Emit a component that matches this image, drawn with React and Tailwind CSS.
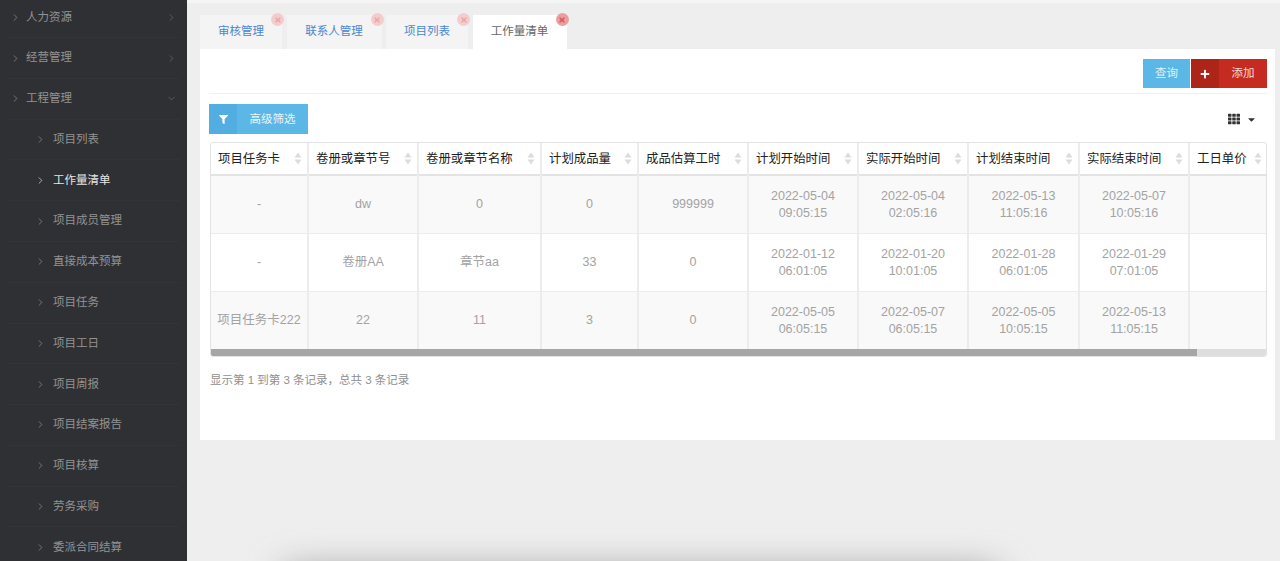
import React from "react";
import { FaFilter, FaPlus, FaTh, FaCaretDown, FaTimes } from "react-icons/fa";
import { ChevronRight, ChevronDown } from "lucide-react";

const fontStack = "font-['Liberation_Sans','Noto_Sans_CJK_SC',sans-serif]";

const menus = [
  { name: "人力资源", arrow: "right" },
  { name: "经营管理", arrow: "right" },
  { name: "工程管理", arrow: "down" },
  { name: "项目列表", sub: true },
  { name: "工作量清单", sub: true, active: true },
  { name: "项目成员管理", sub: true },
  { name: "直接成本预算", sub: true },
  { name: "项目任务", sub: true },
  { name: "项目工日", sub: true },
  { name: "项目周报", sub: true },
  { name: "项目结案报告", sub: true },
  { name: "项目核算", sub: true },
  { name: "劳务采购", sub: true },
  { name: "委派合同结算", sub: true },
];

const tabs = [
  { name: "审核管理", width: "w-[82px]" },
  { name: "联系人管理", width: "w-[95px]" },
  { name: "项目列表", width: "w-[82px]" },
  { name: "工作量清单", width: "w-[94px]", active: true },
];

const columns = [
  { title: "项目任务卡", width: "w-[97px]" },
  { title: "卷册或章节号", width: "w-[110px]" },
  { title: "卷册或章节名称", width: "w-[123px]" },
  { title: "计划成品量", width: "w-[97px]" },
  { title: "成品估算工时", width: "w-[110px]" },
  { title: "计划开始时间", width: "w-[110px]" },
  { title: "实际开始时间", width: "w-[110px]" },
  { title: "计划结束时间", width: "w-[111px]" },
  { title: "实际结束时间", width: "w-[110px]" },
  { title: "工日单价", width: "w-[79px]" },
];

const rows = [
  ["-", "dw", "0", "0", "999999", ["2022-05-04", "09:05:15"], ["2022-05-04", "02:05:16"], ["2022-05-13", "11:05:16"], ["2022-05-07", "10:05:16"], ""],
  ["-", "卷册AA", "章节aa", "33", "0", ["2022-01-12", "06:01:05"], ["2022-01-20", "10:01:05"], ["2022-01-28", "06:01:05"], ["2022-01-29", "07:01:05"], ""],
  ["项目任务卡222", "22", "11", "3", "0", ["2022-05-05", "06:05:15"], ["2022-05-07", "06:05:15"], ["2022-05-05", "10:05:15"], ["2022-05-13", "11:05:15"], ""],
];

const SortIcon = () => (
  <svg width="8" height="13" viewBox="0 0 8 13" className="shrink-0">
    <path d="M4 0.5 L7.5 5.5 H0.5 Z" fill="#dcdcdc" />
    <path d="M4 12.5 L7.5 7.5 H0.5 Z" fill="#dcdcdc" />
  </svg>
);

const Sidebar = () => (
  <div className="w-[187px] h-full shrink-0 bg-[#2f3033] overflow-hidden">
    <div className="-mt-[2.6px] px-2">
      {menus.map((m) => (
        <div
          key={m.name}
          className={`h-[40.77px] flex items-center border-b border-[#333437] text-[11.5px] ${
            m.sub ? "pl-[27px]" : "pl-[2px]"
          } ${m.active ? "text-[#e6e6e6]" : "text-[#939393]"}`}
        >
          <ChevronRight size={11} strokeWidth={1.5} className={`shrink-0 ${m.sub ? "mr-[7px]" : "mr-[5px]"}`} />
          <span className="flex-1">{m.name}</span>
          {m.arrow === "right" && <ChevronRight size={11} strokeWidth={1.2} className="mr-[2px] text-[#7d7d7d]" />}
          {m.arrow === "down" && <ChevronDown size={11} strokeWidth={1.2} className="mr-[2px] text-[#7d7d7d]" />}
        </div>
      ))}
    </div>
  </div>
);

const Tabs = () => (
  <div className="flex gap-[4.5px] h-[34px] pl-[13px]">
    {tabs.map((t) => (
      <div
        key={t.name}
        className={`relative ${t.width} flex items-center justify-center text-[11.5px] ${
          t.active ? "bg-white text-[#666666]" : "bg-[#f4f4f4] text-[#4a86d0]"
        }`}
      >
        {t.name}
        <span
          className={`absolute -top-[2px] -right-[2px] w-[13px] h-[13px] rounded-full flex items-center justify-center text-[8px] ${
            t.active ? "bg-[#ee9d9d] text-[#cf5a5a]" : "bg-[#f3cdcd] text-[#e8a6a6]"
          }`}
        >
          <FaTimes />
        </span>
      </div>
    ))}
  </div>
);

const Toolbar = () => (
  <div className="ml-[9px] mr-[8px] h-[45px] pt-[10px] border-b border-[#f0f0f0] flex justify-end gap-[1px]">
    <button className="w-[47px] h-[29px] bg-[#5bb7e5] text-[#dff2fb] text-[11.5px]">查询</button>
    <button className="w-[76px] h-[29px] bg-[#c62b22] text-[#f8dcdc] text-[11.5px] flex">
      <span className="w-[28px] h-full bg-[#ad2419] flex items-center justify-center text-white text-[10px]">
        <FaPlus />
      </span>
      <span className="flex-1 h-full flex items-center justify-center">添加</span>
    </button>
  </div>
);

const Filters = () => (
  <div className="flex items-center justify-between h-[30px] mt-[10px] ml-[9px] mr-[18px]">
    <button className="w-[99px] h-[30px] bg-[#5bb7e5] text-[#e8f5fc] text-[11.5px] flex">
      <span className="w-[28px] h-full bg-[#52ade0] flex items-center justify-center text-white text-[9px]">
        <FaFilter />
      </span>
      <span className="flex-1 h-full pt-px flex items-center justify-center">高级筛选</span>
    </button>
    <div className="flex items-center gap-[6px] text-[#333333]">
      <FaTh className="text-[12px]" />
      <FaCaretDown className="text-[11px]" />
    </div>
  </div>
);

const DataTable = () => (
  <div className="ml-[10px] mt-[8px] w-[1057px] h-[215px] border border-[#e3e3e3] rounded-[3px] overflow-hidden">
    <table className="table-fixed w-[1055px] border-collapse">
      <thead>
        <tr className="h-[32px] border-b-2 border-[#e3e3e3]">
          {columns.map((c) => (
            <th key={c.title} className={`${c.width} border-r-2 border-[#ececec] pl-[7px] pr-[5px] pt-px font-normal text-[12.4px] text-[#222222] text-left overflow-hidden`}>
              <div className="flex items-center justify-between whitespace-nowrap">
                {c.title}
                <SortIcon />
              </div>
            </th>
          ))}
        </tr>
      </thead>
      <tbody>
        {rows.map((row, i) => (
          <tr key={i} className={`h-[58px] border-b border-[#ececec] ${i === 1 ? "bg-white" : "bg-[#f9f9f9]"}`}>
            {row.map((cell, j) => (
              <td key={j} className="border-r-2 border-[#ececec] text-center text-[12.5px] leading-[17px] text-[#a3a3a3] whitespace-nowrap">
                {Array.isArray(cell) ? (
                  <div className="pt-[2px]">
                    {cell[0]}
                    <br />
                    {cell[1]}
                  </div>
                ) : (
                  cell
                )}
              </td>
            ))}
          </tr>
        ))}
      </tbody>
    </table>
    <div className="h-[7px] bg-[#dedede] -mt-[1px]">
      <div className="h-full w-[986px] bg-[#a6a6a6]" />
    </div>
  </div>
);

export default function App() {
  return (
    <div className={`relative flex w-[1280px] h-[561px] overflow-hidden bg-[#eeeeee] ${fontStack}`}>
      <Sidebar />
      <div className="flex-1">
        <div className="h-[3px] mb-[12px] bg-[#f5f5f5]" />
        <Tabs />
        <div className="ml-[13px] w-[1075px] h-[391px] bg-white overflow-hidden">
          <Toolbar />
          <Filters />
          <DataTable />
          <div className="ml-[10px] mt-[15px] text-[11.5px] text-[#8f8f8f]">显示第 1 到第 3 条记录，总共 3 条记录</div>
        </div>
      </div>
      {/* blurred shadow coming up from the bottom edge */}
      <div className="absolute left-[285px] top-[572px] w-[712px] h-[40px] bg-[#8a8a8a] blur-[18px]" />
    </div>
  );
}
